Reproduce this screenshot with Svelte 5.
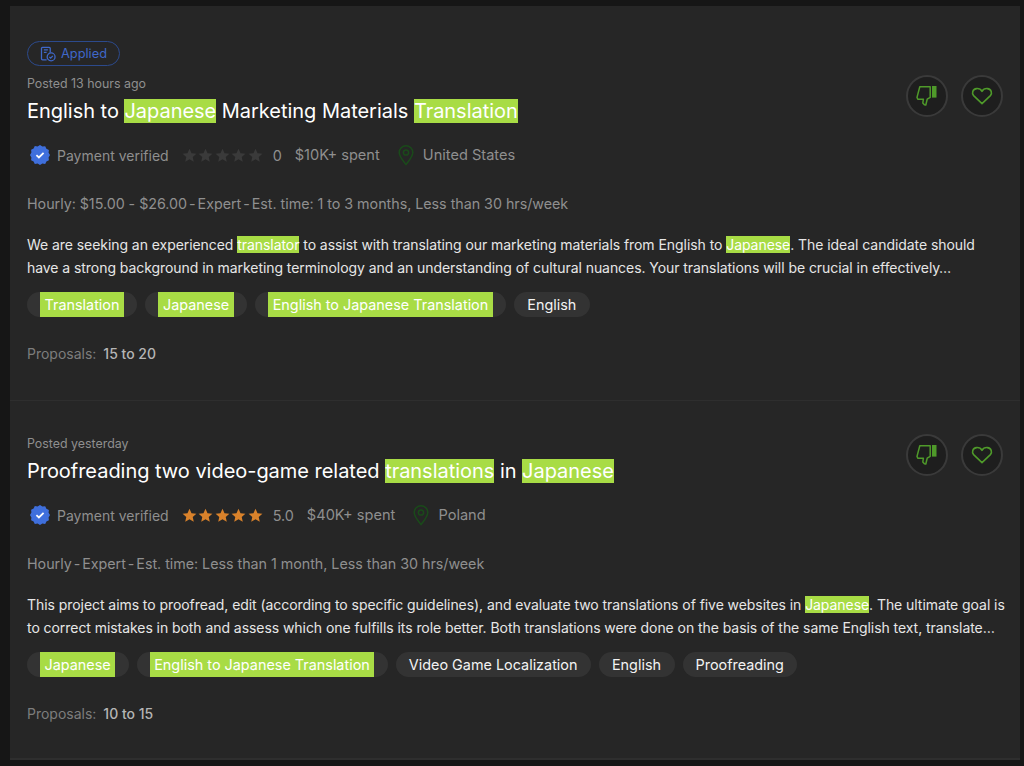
<script>
  const jobs = [
    {
      applied: true,
      posted: 'Posted 13 hours ago',
      title: ['English to ', '*Japanese', ' Marketing Materials ', '*Translation'],
      stars: 0,
      rating: '0',
      spent: '$10K+ spent',
      country: 'United States',
      info: ['Hourly: $15.00 - $26.00', 'Expert', 'Est. time: 1 to 3 months, Less than 30 hrs/week'],
      desc: [
        ['We are seeking an experienced ', '*translator', ' to assist with translating our marketing materials from English to ', '*Japanese', '. The ideal candidate should'],
        ['have a strong background in marketing terminology and an understanding of cultural nuances. Your translations will be crucial in effectively…']
      ],
      tags: ['*Translation', '*Japanese', '*English to Japanese Translation', 'English'],
      proposals: '15 to 20'
    },
    {
      applied: false,
      posted: 'Posted yesterday',
      title: ['Proofreading two video-game related ', '*translations', ' in ', '*Japanese'],
      stars: 5,
      rating: '5.0',
      spent: '$40K+ spent',
      country: 'Poland',
      info: ['Hourly', 'Expert', 'Est. time: Less than 1 month, Less than 30 hrs/week'],
      desc: [
        ['This project aims to proofread, edit (according to specific guidelines), and evaluate two translations of five websites in ', '*Japanese', '. The ultimate goal is'],
        ['to correct mistakes in both and assess which one fulfills its role better. Both translations were done on the basis of the same English text, translate…']
      ],
      tags: ['*Japanese', '*English to Japanese Translation', 'Video Game Localization', 'English', 'Proofreading'],
      proposals: '10 to 15'
    }
  ];

  const isMark = (s) => s.startsWith('*');
  const plain = (s) => s.replace('*', '');
</script>

{#snippet rich(parts)}
  {#each parts as part}{#if isMark(part)}<mark>{plain(part)}</mark>{:else}{part}{/if}{/each}
{/snippet}

<div class="page">
  <div class="card">
    {#each jobs as job, i}
      <section class="job" class:first={i === 0}>
        <div class="actions">
          <button class="round" aria-label="Not interested">
            <svg width="22" height="22" viewBox="0 0 22 22" fill="none" stroke="#4f9a2a" stroke-width="1.5" stroke-linejoin="round">
              <path d="M3.800 1.800H14.200V12.400L11.200 14.200 9.800 20 8.400 19.800 6.800 18 7.400 14.200H1.800L1 12.400z" />
              <rect x="16" y="1" width="4.500" height="11.600" fill="#4f9a2a" stroke="none" />
            </svg>
          </button>
          <button class="round" aria-label="Save job">
            <svg width="22" height="20" viewBox="0 0 22 20" fill="none" stroke="#4f9a2a" stroke-width="1.6" stroke-linejoin="round">
              <path d="M11 17.600 2.600 9.600C.6 7.400 1.400 3 5.600 2.600 8 2.400 10 3.600 11 5.400c1-1.800 3-3 5.400-2.800 4.200.4 5 4.800 3 7z" />
            </svg>
          </button>
        </div>

        {#if job.applied}
          <div class="applied">
            <svg width="16" height="16" viewBox="0 0 15 15" fill="none" stroke="#3f68c9" stroke-width="1.2">
              <path d="M6.200 13H2.400a1 1 0 0 1-1-1V2.200a1 1 0 0 1 1-1h6.200a1 1 0 0 1 1 1V6" />
              <path d="M3.600 3.600h3.800M3.600 6h2.600" />
              <circle cx="10.400" cy="10.200" r="3.700" />
              <path d="M8.800 10.200l1.200 1.200 2-2.200" />
            </svg>
            Applied
          </div>
        {/if}
        <div class="posted">{job.posted}</div>
        <h2>{@render rich(job.title)}</h2>

        <div class="meta">
          <svg class="badge" width="22" height="22" viewBox="0 0 22 22">
            <path fill="#3f6fdc" d="M11 1l2.400 1.500 2.800-.3 1.200 2.500 2.500 1.200-.3 2.800L21 11l-1.400 2.400.3 2.800-2.500 1.200-1.200 2.500-2.800-.3L11 21l-2.400-1.400-2.800.3-1.200-2.500-2.500-1.200.3-2.800L1 11l1.400-2.400-.3-2.800 2.500-1.200 1.200-2.500 2.800.3z" />
            <path d="M7.400 11.200l2.500 2.300 4.700-4.600" fill="none" stroke="#fff" stroke-width="1.800" />
          </svg>
          <span class="verified">Payment verified</span>
          <span class="stars">
            {#each [0, 1, 2, 3, 4] as n}
              <svg width="15" height="15" viewBox="0 0 20 20">
                <path fill={n < job.stars ? '#d9822b' : '#3a3a3a'} d="M10 1l2.700 6 6.500.7-4.900 4.300 1.400 6.400L10 15.100l-5.700 3.300 1.400-6.400L.8 7.700l6.500-.7z" />
              </svg>
            {/each}
          </span>
          <span class="rating">{job.rating}</span>
          <span class="spent">{job.spent}</span>
          <svg class="pin" width="18" height="22" viewBox="0 0 18 22" fill="none" stroke="#1a4a1a" stroke-width="1.500">
            <path d="M9 20.500C5.500 16 2.200 12.500 2.200 8.500a6.800 6.800 0 0 1 13.600 0C15.800 12.500 12.500 16 9 20.500z" />
            <circle cx="9" cy="8.500" r="2.600" />
          </svg>
          <span class="country">{job.country}</span>
        </div>

        <div class="info">
          {#each job.info as part, p}
            {#if p > 0}<span class="sep">-</span>{/if}<span>{part}</span>
          {/each}
        </div>

        <div class="desc">
          {#each job.desc as line}
            <div class="line">{@render rich(line)}</div>
          {/each}
        </div>

        <div class="tags">
          {#each job.tags as tag}
            <span class="tag">
              {#if isMark(tag)}<mark>{plain(tag)}</mark>{:else}{tag}{/if}
            </span>
          {/each}
        </div>

        <div class="proposals"><span>Proposals:</span> <b>{job.proposals}</b></div>
      </section>
    {/each}
  </div>
</div>

<style>
  :global(body) {
    margin: 0;
    background: #161616;
  }

  .page {
    height: 766px;
    overflow: hidden;
    padding: 6px 4px 6px 10px;
    box-sizing: border-box;
    font-family: Inter, "Liberation Sans", sans-serif;
  }

  .card {
    height: 754px;
    background: #262626;
    border-bottom: 2px solid #2e2e2e;
    box-sizing: border-box;
  }

  .job {
    position: relative;
    height: 359px;
    padding: 35px 17px 0;
    box-sizing: border-box;
  }

  .job.first {
    height: 395px;
    border-bottom: 1px solid #2e2e2e;
  }

  mark {
    background: #a8dc45;
    color: #fff;
  }

  .actions {
    position: absolute;
    top: 33px;
    right: 17px;
    display: flex;
    gap: 13px;
  }

  .job.first .actions {
    top: 69px;
  }

  .round {
    width: 42px;
    height: 42px;
    padding: 0;
    border-radius: 50%;
    border: 2px solid #3a3a3a;
    background: #1e1e1e;
    display: flex;
    align-items: center;
    justify-content: center;
  }

  .applied {
    width: 93px;
    height: 25px;
    margin-bottom: 10px;
    box-sizing: border-box;
    border: 1px solid #2c4a8c;
    border-radius: 13px;
    display: flex;
    align-items: center;
    justify-content: center;
    gap: 5px;
    color: #3f68c9;
    font-size: 12.8px;
  }

  .posted {
    color: #8f8f8f;
    font-size: 12.4px;
    line-height: 16px;
  }

  h2 {
    margin: 7px 0 0;
    color: #fff;
    font-size: 20px;
    font-weight: 400;
    line-height: 25px;
    letter-spacing: -0.03px;
    white-space: nowrap;
  }

  .meta {
    display: flex;
    align-items: center;
    height: 22px;
    margin-top: 20px;
    padding-left: 2px;
    color: #8f8f8f;
    font-size: 14.4px;
  }

  .verified {
    margin-left: 6px;
    font-size: 14px;
  }

  .stars {
    display: flex;
    gap: 1.500px;
    margin-left: 13px;
  }

  .rating {
    margin-left: 10px;
  }

  .spent {
    margin-left: 13px;
    font-size: 14.6px;
  }

  .pin {
    margin-left: 17px;
  }

  .country {
    margin-left: 8px;
    font-size: 14.6px;
  }

  .info {
    display: flex;
    margin-top: 27px;
    color: #8f8f8f;
    font-size: 14.3px;
    line-height: 22px;
    letter-spacing: -0.03px;
    white-space: nowrap;
  }

  .sep {
    margin: 0 2px;
  }

  .desc {
    margin-top: 18px;
    color: #e6e6e6;
    font-size: 14px;
    line-height: 23px;
    letter-spacing: -0.06px;
    white-space: nowrap;
  }

  .tags {
    display: flex;
    gap: 8px;
    margin-top: 13px;
  }

  .tag {
    height: 25px;
    padding: 0 13.500px 0 13px;
    border-radius: 13px;
    background: #333333;
    color: #f2f2f2;
    font-size: 14.4px;
    line-height: 25px;
    white-space: nowrap;
  }

  .tag mark {
    display: inline-block;
    height: 25px;
    padding: 0 4.500px;
  }

  .proposals {
    margin-top: 26px;
    color: #7d7d7d;
    font-size: 14px;
    line-height: 22px;
  }

  .proposals b {
    margin-left: 3px;
    color: #b5b5b5;
    font-weight: 500;
  }
</style>
